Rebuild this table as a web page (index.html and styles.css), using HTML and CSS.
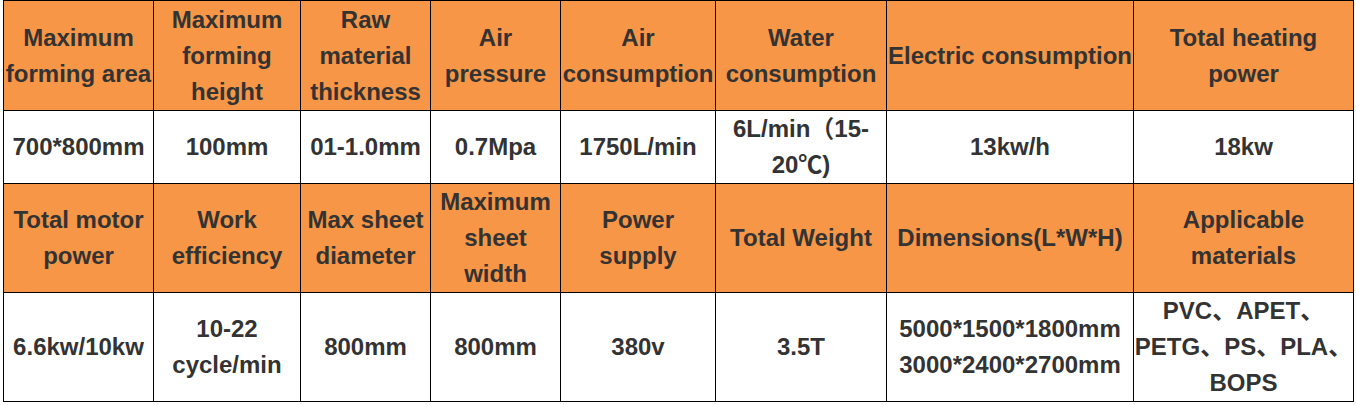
FILE: index.html
```html
<!DOCTYPE html>
<html lang="en">
<head>
<meta charset="utf-8">
<title>Machine specifications</title>
<link rel="stylesheet" href="styles.css">
</head>
<body>
<div class="wrap">
<table class="spec">
  <colgroup>
    <col class="c1"><col class="c2"><col class="c3"><col class="c4">
    <col class="c5"><col class="c6"><col class="c7"><col class="c8">
  </colgroup>
  <tbody>
    <tr class="head r1">
      <td>Maximum forming area</td>
      <td>Maximum forming height</td>
      <td>Raw material thickness</td>
      <td>Air pressure</td>
      <td>Air consumption</td>
      <td>Water consumption</td>
      <td>Electric consumption</td>
      <td>Total heating power</td>
    </tr>
    <tr class="data r2">
      <td>700*800mm</td>
      <td>100mm</td>
      <td>01-1.0mm</td>
      <td>0.7Mpa</td>
      <td>1750L/min</td>
      <td>6L/min<span class="cjk">（</span>15-<wbr>20<span class="cjk">℃</span>)</td>
      <td>13kw/h</td>
      <td>18kw</td>
    </tr>
    <tr class="head r3">
      <td>Total motor power</td>
      <td>Work efficiency</td>
      <td>Max sheet diameter</td>
      <td>Maximum sheet width</td>
      <td>Power supply</td>
      <td>Total Weight</td>
      <td>Dimensions(L*W*H)</td>
      <td>Applicable materials</td>
    </tr>
    <tr class="data r4">
      <td>6.6kw/10kw</td>
      <td>10-22 cycle/min</td>
      <td>800mm</td>
      <td>800mm</td>
      <td>380v</td>
      <td>3.5T</td>
      <td>5000*1500*1800mm<br>3000*2400*2700mm</td>
      <td>PVC<span class="cjk">、</span>APET<span class="cjk">、</span>PETG<span class="cjk">、</span>PS<span class="cjk">、</span>PLA<span class="cjk">、</span>BOPS</td>
    </tr>
  </tbody>
</table>
</div>
</body>
</html>
```
FILE: styles.css
```css
html, body {
  margin: 0;
  padding: 0;
  background: #ffffff;
}

.wrap {
  padding: 0 0 0 3px;
}

.spec {
  border-collapse: collapse;
  table-layout: fixed;
  width: 1351px;
  font-family: "Liberation Sans", Arial, "Noto Sans CJK SC", sans-serif;
  font-weight: bold;
  font-size: 24px;
  line-height: 36px;
  color: #333333;
}

.c1 { width: 150px; }
.c2 { width: 147px; }
.c3 { width: 130px; }
.c4 { width: 130px; }
.c5 { width: 155px; }
.c6 { width: 171px; }
.c7 { width: 247px; }
.c8 { width: 220px; }

.spec td {
  border: 1px solid #000000;
  padding: 0;
  text-align: center;
  vertical-align: middle;
}

.head td {
  background: #f79646;
}

.data td {
  background: #ffffff;
}

.r1 { height: 110px; }
.r2 { height: 73px; }
.r3 { height: 109px; }
.r4 { height: 109px; }

.cjk {
  font-family: "Noto Sans CJK SC", sans-serif;
  line-height: 1;
}
```
